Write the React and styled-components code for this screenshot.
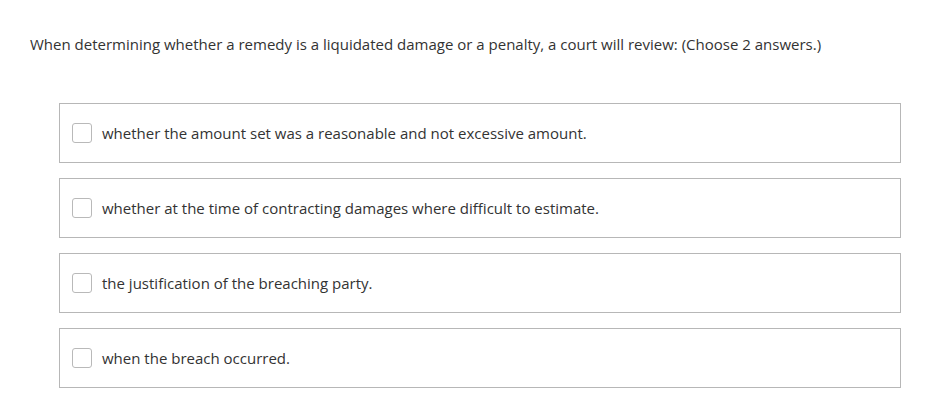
import styled, { createGlobalStyle } from 'styled-components';

const GlobalStyle = createGlobalStyle`
  body {
    margin: 0;
    background: #ffffff;
    font-family: 'Open Sans', 'Liberation Sans', sans-serif;
    color: #333333;
  }
`;

const answers = [
  'whether the amount set was a reasonable and not excessive amount.',
  'whether at the time of contracting damages where difficult to estimate.',
  'the justification of the breaching party.',
  'when the breach occurred.',
];

const App = () => {
  return (
    <>
      <GlobalStyle />
      <Page>
        <Question>
          When determining whether a remedy is a liquidated damage or a penalty, a court will
          review: (Choose 2 answers.)
        </Question>
        <Options>
          {answers.map((text) => (
            <Option key={text}>
              <Box type="checkbox" />
              <Label>{text}</Label>
            </Option>
          ))}
        </Options>
      </Page>
    </>
  );
};

const Page = styled.div`
  padding: 34px 0 0 30px;
`;

const Question = styled.div`
  font-size: 15px;
  line-height: 21px;
  color: #333333;
`;

const Options = styled.div`
  display: flex;
  flex-direction: column;
  gap: 15px;
  margin: 48px 0 0 29px;
  width: 842px;
`;

const Option = styled.label`
  display: flex;
  align-items: center;
  gap: 10px;
  box-sizing: border-box;
  height: 60px;
  padding: 0 12px;
  border: 1px solid #b7b7b7;
  background: #ffffff;
  cursor: pointer;
`;

const Box = styled.input`
  appearance: none;
  margin: 0;
  box-sizing: border-box;
  width: 20px;
  height: 20px;
  border: 1px solid #b9b9b9;
  border-radius: 3px;
  background: #ffffff;
`;

const Label = styled.span`
  font-size: 15px;
  line-height: 21px;
  color: #333333;
`;

export default App;
